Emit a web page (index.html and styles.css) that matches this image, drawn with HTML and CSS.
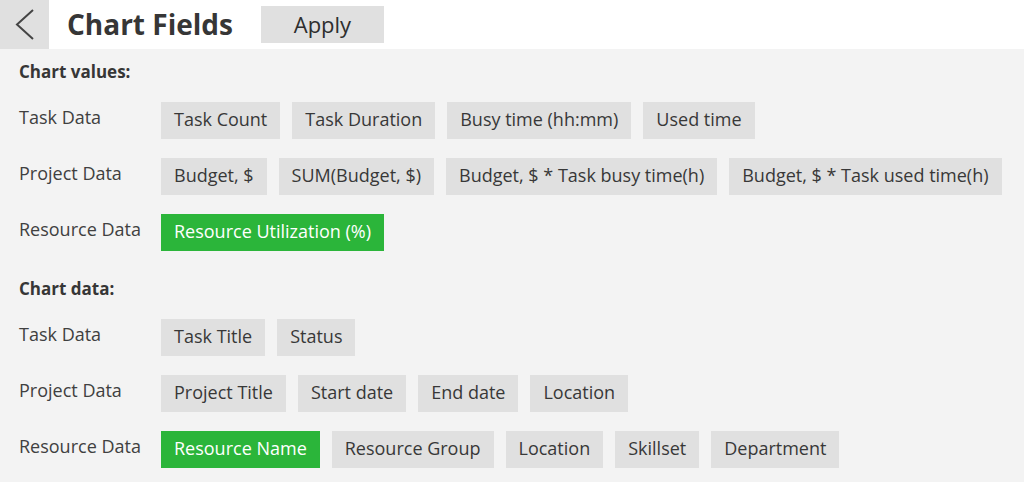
FILE: index.html
```html
<!DOCTYPE html>
<html>
<head>
<meta charset="utf-8">
<link rel="stylesheet" href="styles.css">
</head>
<body>
<header class="topbar">
  <div class="back">
    <svg width="49" height="49" viewBox="0 0 49 49"><polyline points="33,10 17,24.5 33,39" fill="none" stroke="#444" stroke-width="2"/></svg>
  </div>
  <h1 class="title">Chart Fields</h1>
  <div class="apply">Apply</div>
</header>
<main class="content">
  <section class="section">
    <h2 class="heading">Chart values:</h2>
    <div class="rows">
      <div class="row">
        <div class="label">Task Data</div>
        <div class="chips">
          <span class="chip">Task Count</span>
          <span class="chip">Task Duration</span>
          <span class="chip">Busy time (hh:mm)</span>
          <span class="chip">Used time</span>
        </div>
      </div>
      <div class="row">
        <div class="label">Project Data</div>
        <div class="chips">
          <span class="chip">Budget, $</span>
          <span class="chip">SUM(Budget, $)</span>
          <span class="chip">Budget, $ * Task busy time(h)</span>
          <span class="chip">Budget, $ * Task used time(h)</span>
        </div>
      </div>
      <div class="row">
        <div class="label">Resource Data</div>
        <div class="chips">
          <span class="chip active">Resource Utilization (%)</span>
        </div>
      </div>
    </div>
  </section>
  <section class="section second">
    <h2 class="heading">Chart data:</h2>
    <div class="rows">
      <div class="row">
        <div class="label">Task Data</div>
        <div class="chips">
          <span class="chip">Task Title</span>
          <span class="chip">Status</span>
        </div>
      </div>
      <div class="row">
        <div class="label">Project Data</div>
        <div class="chips">
          <span class="chip">Project Title</span>
          <span class="chip">Start date</span>
          <span class="chip">End date</span>
          <span class="chip">Location</span>
        </div>
      </div>
      <div class="row">
        <div class="label">Resource Data</div>
        <div class="chips">
          <span class="chip active">Resource Name</span>
          <span class="chip">Resource Group</span>
          <span class="chip">Location</span>
          <span class="chip">Skillset</span>
          <span class="chip">Department</span>
        </div>
      </div>
    </div>
  </section>
</main>
</body>
</html>
```

FILE: styles.css
```css
html, body {
  margin: 0;
  padding: 0;
}
body {
  background: #f3f3f3;
  font-family: "Open Sans", "DejaVu Sans", sans-serif;
  color: #3d3d3d;
  width: 1024px;
  height: 482px;
  overflow: hidden;
}
.topbar {
  display: flex;
  align-items: center;
  height: 49px;
  background: #ffffff;
}
.back {
  width: 49px;
  height: 49px;
  background: #e0e0e0;
}
.back svg {
  display: block;
}
.title {
  margin: 0 0 0 18px;
  font-size: 28px;
  font-weight: 700;
  line-height: 49px;
  color: #363636;
}
.apply {
  margin-left: 28px;
  width: 123px;
  height: 37px;
  background: #e0e0e0;
  font-size: 22px;
  line-height: 37px;
  text-align: center;
  color: #2e2e2e;
}
.content {
  padding: 13px 19px 0 19px;
}
.section.second {
  margin-top: 28px;
}
.heading {
  margin: 0 0 20px 0;
  font-size: 17px;
  font-weight: 700;
  line-height: 20px;
  color: #363636;
}
.rows {
  display: flex;
  flex-direction: column;
  gap: 19px;
}
.row {
  display: flex;
  align-items: flex-start;
}
.label {
  width: 142px;
  flex: none;
  padding-top: 5px;
  font-size: 18px;
  line-height: 20px;
  color: #404040;
}
.chips {
  display: flex;
  gap: 12px;
}
.chip {
  display: block;
  height: 35px;
  padding: 0 13px 2px 13px;
  background: #e0e0e0;
  font-size: 18px;
  line-height: 35px;
  color: #383838;
  white-space: nowrap;
}
.chip.active {
  background: #2bb53a;
  color: #ffffff;
}
```
